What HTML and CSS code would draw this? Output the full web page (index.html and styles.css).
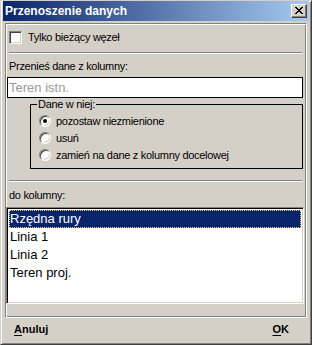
FILE: index.html
```html
<!DOCTYPE html>
<html lang="pl">
<head>
<meta charset="utf-8">
<title>Przenoszenie danych</title>
<link rel="stylesheet" href="styles.css">
</head>
<body>
<div class="window">
  <div class="titlebar">
    <span class="title">Przenoszenie danych</span>
    <span class="close">
      <svg width="8" height="7" viewBox="0 0 8 7"><path d="M0 0h2v1h1v1h2V1h1V0h2v1H7v1H6v1H5v1h1v1h1v1h1v1H6V6H5V5H3v1H2v1H0V6h1V5h1V4h1V3H2V2H1V1H0z" fill="#000"/></svg>
    </span>
  </div>
  <div class="panel">
    <label class="check-row"><span class="checkbox"></span><span>Tylko bieżący węzeł</span></label>
    <div class="sep"></div>
    <div class="label">Przenieś dane z kolumny:</div>
    <div class="input">Teren istn.</div>
    <fieldset class="group">
      <legend>Dane w niej:</legend>
      <div class="radio-row"><span class="radio checked"></span><span>pozostaw niezmienione</span></div>
      <div class="radio-row"><span class="radio"></span><span>usuń</span></div>
      <div class="radio-row"><span class="radio"></span><span>zamień na dane z kolumny docelowej</span></div>
    </fieldset>
    <div class="sep sep2"></div>
    <div class="label label2">do kolumny:</div>
    <div class="listbox">
      <div class="item selected">Rzędna rury</div>
      <div class="item">Linia 1</div>
      <div class="item">Linia 2</div>
      <div class="item">Teren proj.</div>
    </div>
  </div>
  <div class="buttons">
    <span class="btn"><u>A</u>nuluj</span>
    <span class="btn"><u>O</u>K</span>
  </div>
</div>
</body>
</html>
```
FILE: styles.css
```css
html, body {
  margin: 0;
  padding: 0;
  background: #d4d0c8;
}
body {
  font-family: "Liberation Sans", Arial, sans-serif;
  font-size: 11px;
  letter-spacing: -0.3px;
  color: #000;
}
.window {
  width: 312px;
  height: 345px;
  box-sizing: border-box;
  background: #d4d0c8;
  border: 1px solid;
  border-color: #d4d0c8 #404040 #404040 #d4d0c8;
  box-shadow: inset 1px 1px #fff, inset -1px -1px #808080;
  padding: 0 2px 2px 2px;
  display: flex;
  flex-direction: column;
}
.titlebar {
  height: 20px;
  background: linear-gradient(to right, #0a246a, #a6caf0);
  display: flex;
  align-items: center;
  justify-content: space-between;
  padding: 0 2px 0 2px;
  flex: none;
}
.title {
  color: #fff;
  font-weight: bold;
  font-size: 12px;
  line-height: 14px;
  letter-spacing: 0;
}
.close {
  width: 16px;
  height: 14px;
  box-sizing: border-box;
  background: #d4d0c8;
  border: 1px solid;
  border-color: #fff #404040 #404040 #fff;
  box-shadow: inset -1px -1px #808080;
  display: flex;
  align-items: center;
  justify-content: center;
  padding: 0 1px 1px 0;
}
.close svg { display: block; }
.panel {
  margin: 2px 2px 0 2px;
  border: 1px solid;
  border-color: #808080 #fff #fff #808080;
  box-shadow: inset 1px 1px #fff, inset -1px -1px #808080;
  padding: 1px 1px 13px 1px;
  display: flex;
  flex-direction: column;
}
.check-row {
  display: flex;
  align-items: center;
  gap: 6px;
  margin: 6px 0 0 2px;
  height: 13px;
  line-height: 13px;
}
.checkbox {
  width: 13px;
  height: 13px;
  box-sizing: border-box;
  background: #fff;
  border: 1px solid;
  border-color: #808080 #fff #fff #808080;
  box-shadow: inset 1px 1px #404040, inset -1px -1px #d4d0c8;
}
.sep {
  height: 0;
  border-top: 1px solid #808080;
  border-bottom: 1px solid #fff;
  margin: 8px 3px 0 2px;
}
.label {
  margin: 6px 0 0 2px;
  line-height: 13px;
}
.input {
  margin: 4px 2px 0 0;
  height: 21px;
  box-sizing: border-box;
  background: #fff;
  border: 1px solid #000;
  color: #9a9a9a;
  font-size: 13px;
  letter-spacing: 0;
  line-height: 19px;
  padding-left: 1px;
}
.group {
  margin: 0 2px 0 23px;
  padding: 1px 0 5px 8px;
  border: 1px solid #000;
  min-width: 0;
}
.group legend {
  margin-left: -2px;
  padding: 0 1px;
  line-height: 13px;
}
.radio-row {
  display: flex;
  align-items: center;
  gap: 5px;
  height: 17px;
}
.radio {
  width: 12px;
  height: 12px;
  box-sizing: border-box;
  border-radius: 50%;
  background: #fff;
  border: 1px solid;
  border-color: #808080 #fff #fff #808080;
  box-shadow: inset 1px 1px #404040, inset -1px -1px #d4d0c8;
  display: flex;
  align-items: center;
  justify-content: center;
}
.radio.checked::after {
  content: "";
  width: 4px;
  height: 4px;
  border-radius: 50%;
  background: #000;
}
.sep2 { margin-top: 11px; }
.label2 { margin-top: 7px; }
.listbox {
  margin: 5px 1px 0 -1px;
  height: 97px;
  box-sizing: border-box;
  background: #fff;
  border: 1px solid;
  border-color: #808080 #fff #fff #808080;
  box-shadow: inset 1px 1px #000, inset -1px -1px #d4d0c8;
  padding: 2px 2px;
  font-size: 13px;
  letter-spacing: 0;
}
.item {
  height: 18px;
  line-height: 18px;
  padding-left: 1px;
}
.item.selected {
  background: #0a246a;
  color: #fff;
  outline: 1px dotted #e8d070;
  outline-offset: -1px;
}
.buttons {
  display: flex;
  justify-content: space-between;
  margin: 4px 0 0 0;
  padding: 0 20px 0 11px;
  font-weight: bold;
  letter-spacing: 0;
  line-height: 14px;
}
.btn u { text-decoration-thickness: 1px; text-underline-offset: 2px; }
```
